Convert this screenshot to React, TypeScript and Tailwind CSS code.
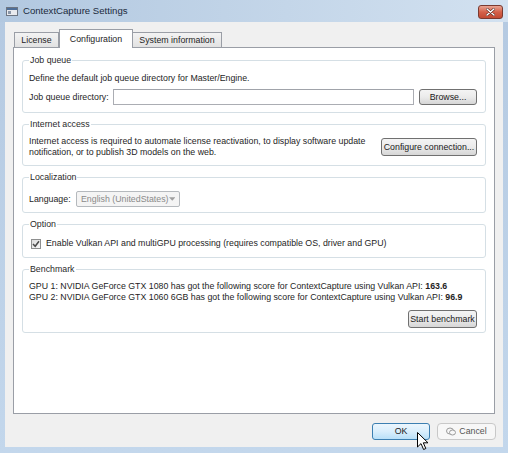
import type { ReactNode } from "react";

function Btn({ children, className = "" }: { children: ReactNode; className?: string }) {
  return (
    <div
      className={`flex items-center justify-center whitespace-nowrap rounded-[3px] border border-[#707070] bg-linear-to-b from-[#f4f4f4] via-[#ebebeb] to-[#d6d6d6] text-[8.8px] leading-none text-[#1a1a1a] ${className}`}
    >
      {children}
    </div>
  );
}

function Group({ title, className, children }: { title: string; className: string; children: ReactNode }) {
  return (
    <fieldset className={`rounded-[3px] border border-[#d5dfe5] pl-[6px] pr-[8px] ${className}`}>
      <legend className="px-[1px] text-[8.8px] leading-[12px] text-[#2a2a2a]">{title}</legend>
      {children}
    </fieldset>
  );
}

export default function App() {
  return (
    <div className="flex h-[453px] w-[508px] flex-col overflow-hidden whitespace-nowrap bg-linear-to-b from-[#b4c9e1] to-[#c3d7ec] font-['Liberation_Sans',Arial,sans-serif] text-[#1e1e1e]">
      {/* title bar */}
      <div className="flex h-[22px] items-center bg-linear-to-r from-[#b2c8e0] to-[#d2e1f0] pl-[6px] pr-[5px]">
        <svg width="12" height="9" viewBox="0 0 12 9">
          <rect x="0.5" y="0.5" width="11" height="8" fill="#e8eaee" stroke="#6d7582" />
          <rect x="1" y="1" width="10" height="2" fill="#4f6f99" />
          <rect x="2" y="4" width="3" height="3" fill="#8a96a8" />
        </svg>
        <span className="ml-[5px] text-[9.6px] text-[#1b2a3c]">ContextCapture Settings</span>
        <div className="ml-auto mt-[1px] flex h-[14px] w-[25px] items-center justify-center rounded-[3px] border border-[#7a3a30] bg-linear-to-b from-[#e8a493] via-[#d4614a] to-[#c24a33]">
          <svg width="9" height="8" viewBox="0 0 9 8">
            <path d="M1 1 L8 7 M8 1 L1 7" stroke="#5a2a22" strokeWidth="2.6" strokeLinecap="round" />
            <path d="M1 1 L8 7 M8 1 L1 7" stroke="#ffffff" strokeWidth="1.4" strokeLinecap="round" />
          </svg>
        </div>
      </div>

      {/* client area */}
      <div className="mb-[6px] ml-[5px] mr-[5px] flex flex-1 flex-col bg-[#f0f0f0] pt-[7px]">
        <div className="flex h-[18px] items-end pl-[9px] text-[8.8px] leading-none">
          <div className="flex h-[15px] w-[45px] items-center justify-center border border-b-0 border-[#9a9ea6] bg-linear-to-b from-[#f3f3f3] to-[#e2e2e2]">
            License
          </div>
          <div className="relative z-10 mb-[-1px] flex h-[19px] w-[74px] items-center justify-center border border-b-0 border-[#9a9ea6] bg-white">
            Configuration
          </div>
          <div className="flex h-[15px] w-[89px] items-center justify-center border border-b-0 border-l-0 border-[#9a9ea6] bg-linear-to-b from-[#f3f3f3] to-[#e2e2e2]">
            System information
          </div>
        </div>

        <div className="mx-[8px] flex h-[367px] flex-col gap-[5px] border border-[#9a9ea6] bg-white px-[8px] pt-[6px] text-[8.8px] leading-[11px]">
          <Group title="Job queue" className="h-[59px]">
            <div className="pt-[6px] leading-[12px]">Define the default job queue directory for Master/Engine.</div>
            <div className="mt-[5px] flex items-center">
              <span className="w-[84px]">Job queue directory:</span>
              <div className="h-[16px] w-[301px] border border-[#abadb3] border-t-[#a0a3aa] bg-white" />
              <Btn className="ml-auto h-[16px] w-[58px]">Browse...</Btn>
            </div>
          </Group>

          <Group title="Internet access" className="h-[48px]">
            <div className="flex items-center pt-[6px]">
              <div className="leading-[11px]">
                Internet access is required to automate license reactivation, to display software update
                <br />
                notification, or to publish 3D models on the web.
              </div>
              <Btn className="ml-auto h-[18px] w-[96px]">Configure connection...</Btn>
            </div>
          </Group>

          <Group title="Localization" className="h-[42px]">
            <div className="flex items-center pt-[8px]">
              <span className="w-[47px]">Language:</span>
              <div className="flex h-[16px] w-[104px] items-center justify-between rounded-[2px] border border-[#b5b9bd] bg-[#f4f4f4] pl-[4px] pr-[4px] text-[#8a8a8a]">
                <span>English (UnitedStates)</span>
                <svg width="7" height="4" viewBox="0 0 7 4">
                  <path d="M0 0 H7 L3.5 4 Z" fill="#a0a0a0" />
                </svg>
              </div>
            </div>
          </Group>

          <Group title="Option" className="h-[40px]">
            <div className="flex items-center pt-[8px]">
              <div className="ml-[2px] flex h-[10px] w-[10px] items-center justify-center border border-[#8e8f8f] bg-linear-to-br from-[#dcdcdc] to-[#f8f8f8]">
                <svg width="8" height="8" viewBox="0 0 8 8">
                  <path d="M1 4 L3.2 6.3 L7 1.2" fill="none" stroke="#4a4a4a" strokeWidth="1.5" />
                </svg>
              </div>
              <span className="ml-[5px]">Enable Vulkan API and multiGPU processing (requires compatible OS, driver and GPU)</span>
            </div>
          </Group>

          <Group title="Benchmark" className="h-[70px]">
            <div className="pt-[6px] leading-[11px]">
              <div>
                GPU 1: NVIDIA GeForce GTX 1080 has got the following score for ContextCapture using Vulkan API: <b>163.6</b>
              </div>
              <div>
                GPU 2: NVIDIA GeForce GTX 1060 6GB has got the following score for ContextCapture using Vulkan API: <b>96.9</b>
              </div>
            </div>
            <div className="mt-[7px] flex justify-end">
              <Btn className="h-[18px] w-[69px]">Start benchmark</Btn>
            </div>
          </Group>
        </div>

        <div className="flex flex-1 items-start justify-end gap-[7px] pr-[7px] pt-[9px]">
          <div className="relative">
            <div className="flex h-[17px] w-[58px] items-center justify-center rounded-[3px] border border-[#3c7fb1] bg-linear-to-b from-[#ecf6fd] via-[#d9eefc] to-[#b9e0f8] text-[8.8px] leading-none text-[#1a1a1a]">
              OK
            </div>
            <svg className="absolute left-[45px] top-[9px]" width="12" height="19" viewBox="0 0 12 19">
              <path d="M0.5 0.5 V15 L4 11.6 L6.6 17.5 L8.8 16.5 L6.3 10.8 H11 Z" fill="#ffffff" stroke="#000000" strokeWidth="1" strokeLinejoin="round" />
            </svg>
          </div>
          <div className="flex h-[17px] w-[59px] items-center justify-center gap-[3px] rounded-[4px] border border-[#c8c8c8] bg-[#f7f7f7] text-[8.8px] leading-none text-[#555]">
            <svg width="10" height="9" viewBox="0 0 10 9">
              <ellipse cx="4" cy="4" rx="3.5" ry="3" fill="none" stroke="#9a9a9a" />
              <ellipse cx="6.5" cy="5.5" rx="3" ry="2.5" fill="#f7f7f7" stroke="#9a9a9a" />
            </svg>
            <span>Cancel</span>
          </div>
        </div>
      </div>
    </div>
  );
}
